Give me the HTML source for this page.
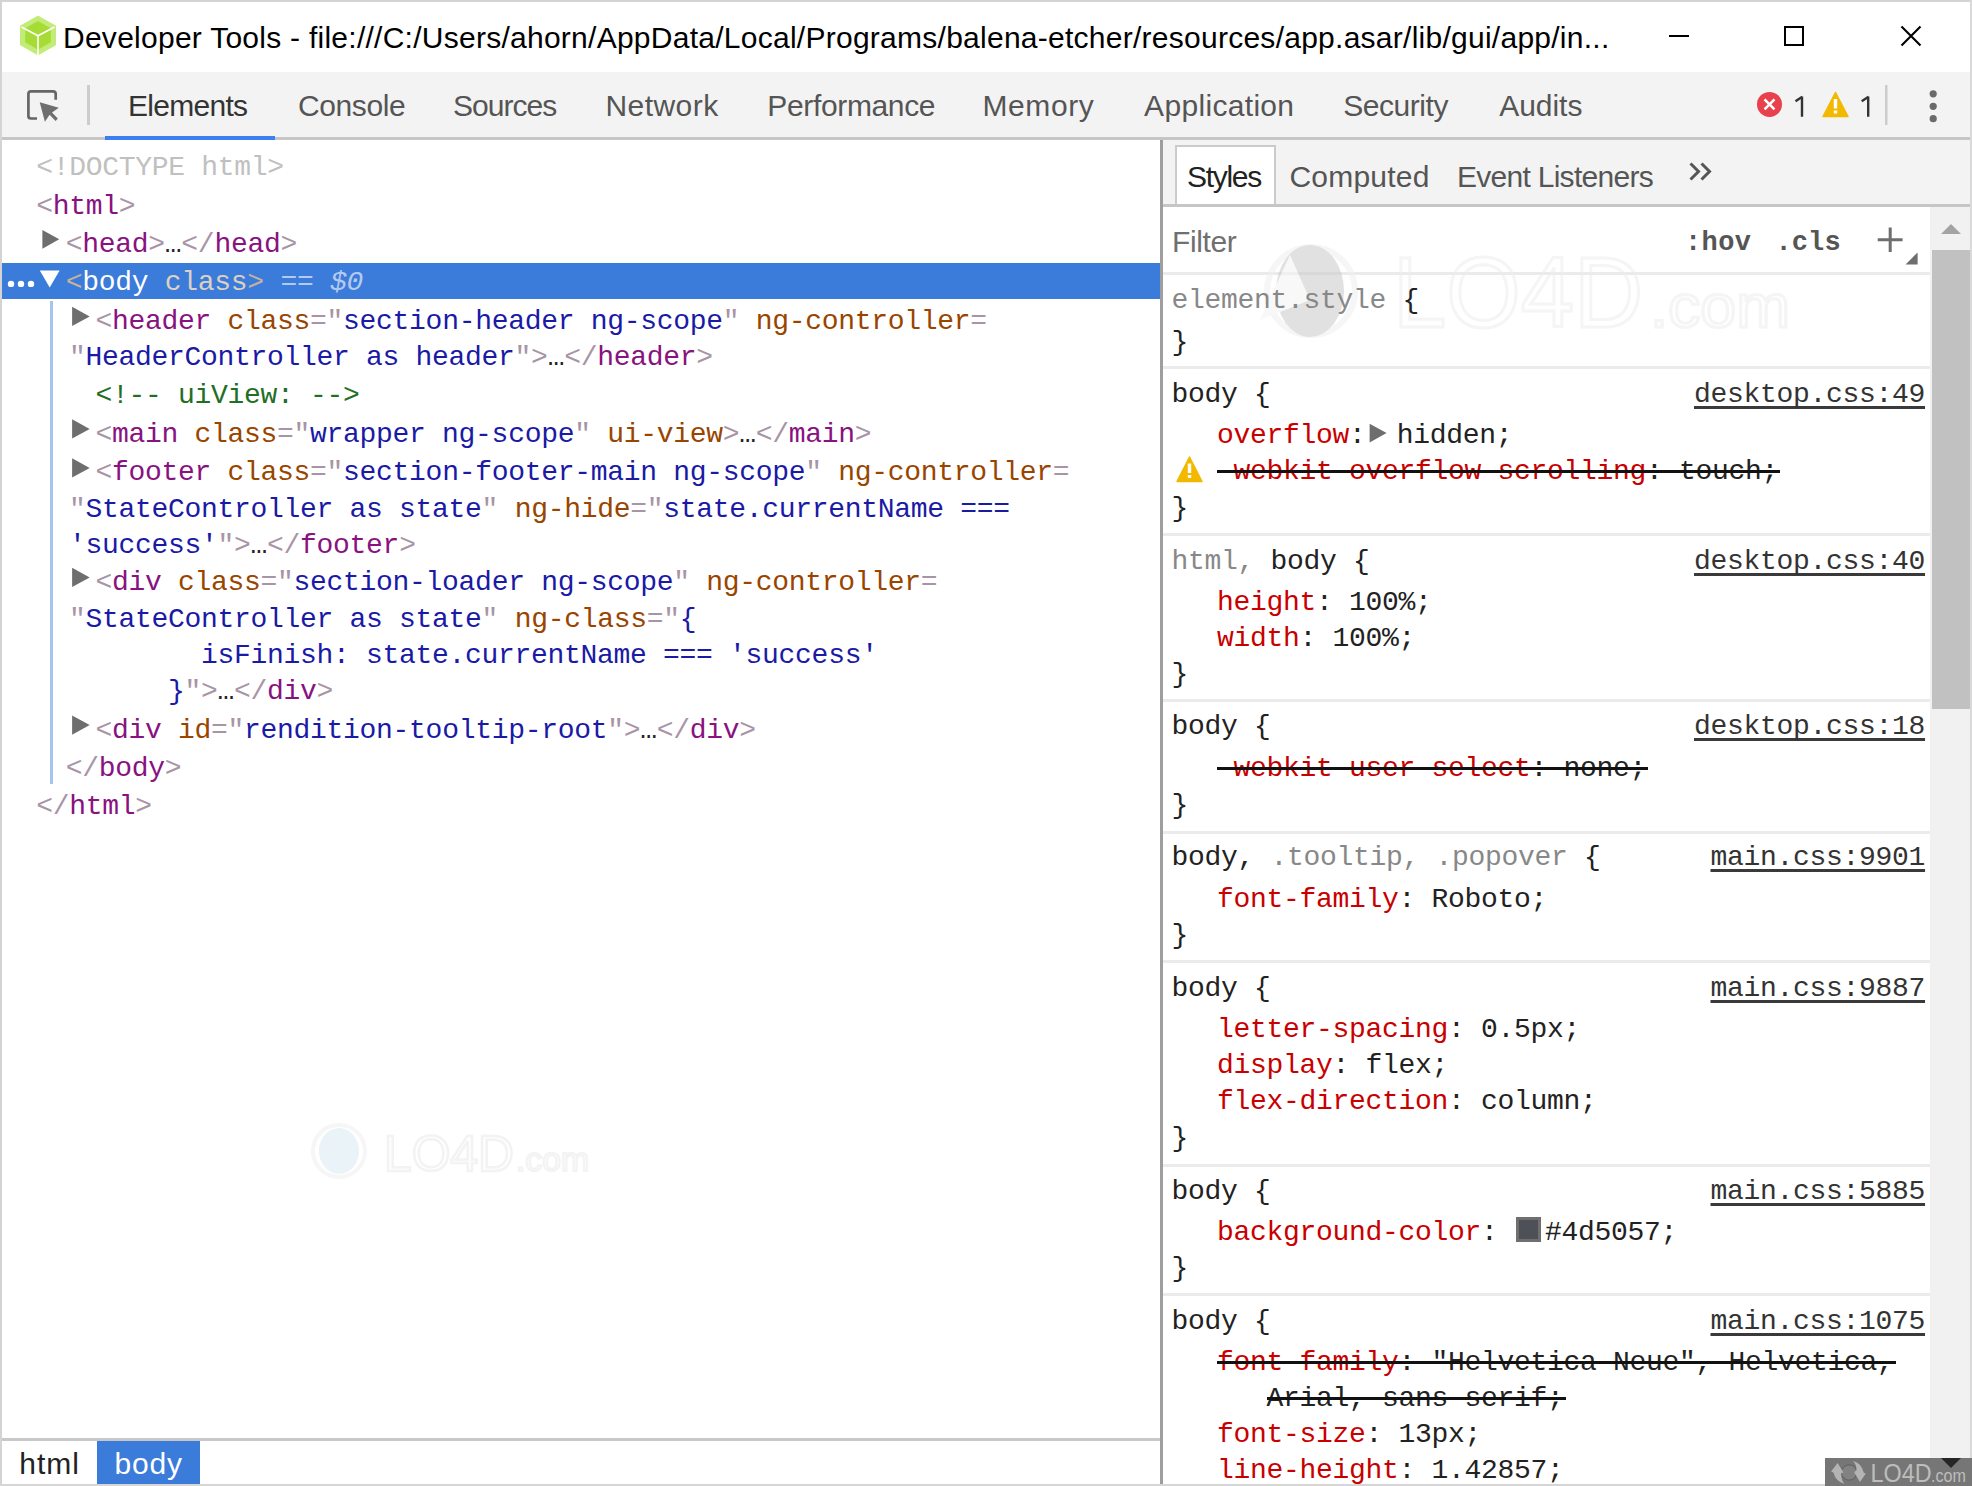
<!DOCTYPE html>
<html><head><meta charset="utf-8">
<style>
html,body{margin:0;padding:0}
body{width:1972px;height:1486px;position:relative;overflow:hidden;background:#fff;font-family:"Liberation Sans",sans-serif}
.r{position:absolute}
.t{position:absolute;white-space:pre}
.m{position:absolute;white-space:pre;font-family:"Liberation Mono",monospace;font-size:28px;line-height:40px}
</style></head><body>
<!-- window border -->
<div class="r" style="left:0;top:0;width:1972px;height:2px;background:#d4d4d4"></div>
<div class="r" style="left:0;top:0;width:2px;height:1486px;background:#d4d4d4"></div>
<div class="r" style="left:1970px;top:0;width:2px;height:1486px;background:#d9d9d9"></div>
<div class="r" style="left:0;top:1484px;width:1972px;height:2px;background:#d6d6d6"></div>
<!-- title icon -->
<svg class="r" style="left:0;top:0" width="100" height="72" viewBox="0 0 100 72">
  <polygon points="38,16.3 55.4,26 55.4,44.8 38,54.8 20.6,44.8 20.6,26" fill="#c2ec78" stroke="#c2ec78" stroke-width="1.2" stroke-linejoin="round"/>
  <polygon points="38,21 50.8,28.2 50.8,42.3 38,49.8 25.2,42.3 25.2,28.2" fill="#a6dc35"/>
  <polyline points="21.5,27 38,35.8 54.5,27" fill="none" stroke="#fff" stroke-width="1.6"/>
  <line x1="38" y1="35.8" x2="38" y2="55" stroke="#fff" stroke-width="1.6"/>
</svg>
<!-- window controls -->
<div class="r" style="left:1669px;top:35px;width:20px;height:2px;background:#000"></div>
<div class="r" style="left:1784px;top:26px;width:16px;height:16px;border:2px solid #000"></div>
<svg class="r" style="left:1895px;top:20px" width="32" height="32" viewBox="0 0 32 32">
  <path d="M6.5,6.5 L25.5,25.5 M25.5,6.5 L6.5,25.5" stroke="#000" stroke-width="2.1" fill="none"/>
</svg>
<!-- toolbar -->
<div class="r" style="left:2px;top:72px;width:1968px;height:65px;background:#f3f3f3"></div>
<div class="r" style="left:2px;top:137px;width:1968px;height:3px;background:#c6c6c6"></div>
<div class="r" style="left:105px;top:136px;width:170px;height:4px;background:#3b7ff1"></div>
<svg class="r" style="left:0;top:72px" width="100" height="65" viewBox="0 72 100 65">
  <path d="M37,118.5 L31,118.5 Q28.4,118.5 28.4,116 L28.4,94 Q28.4,91.4 31,91.4 L53,91.4 Q55.7,91.4 55.7,94 L55.7,99.8" fill="none" stroke="#666" stroke-width="2.7"/>
  <path d="M39.7,102.3 L58.8,107.8 L52,112.6 L57.8,118.6 L55.6,120.9 L49.6,114.8 L44.9,121.7 Z" fill="#6e6e6e"/>
  <rect x="87" y="85" width="3" height="40" fill="#cccccc"/>
</svg>
<!-- errors -->
<svg class="r" style="left:1740px;top:72px" width="232" height="65" viewBox="1740 72 232 65">
  <circle cx="1769.5" cy="104.4" r="12.5" fill="#e8414c"/>
  <path d="M1764.5,99.4 L1774.5,109.4 M1774.5,99.4 L1764.5,109.4" stroke="#fff" stroke-width="2.6"/>
  <path d="M1835.5,92.5 L1848,116.5 L1823,116.5 Z" fill="#f2b900" stroke="#f2b900" stroke-width="1.5" stroke-linejoin="round"/>
  <rect x="1833.8" y="99" width="3.4" height="9.5" fill="#fff"/>
  <rect x="1833.8" y="110.5" width="3.4" height="3" fill="#fff"/>
  <path d="M1802,96.5 L1802,116.7 M1795.5,101.3 L1802.3,96.8" stroke="#333" stroke-width="2.4" fill="none"/>
  <path d="M1868.2,96.5 L1868.2,116.7 M1861.7,101.3 L1868.5,96.8" stroke="#333" stroke-width="2.4" fill="none"/>
  <rect x="1885" y="85" width="2.5" height="40" fill="#cccccc"/>
  <circle cx="1933.2" cy="93.8" r="3.6" fill="#6b6b6b"/>
  <circle cx="1933.2" cy="106.3" r="3.6" fill="#6b6b6b"/>
  <circle cx="1933.2" cy="118.7" r="3.6" fill="#6b6b6b"/>
</svg>
<!-- left pane -->
<div class="r" style="left:2px;top:263px;width:1158px;height:36px;background:#3b7bd9"></div>
<svg class="r" style="left:0;top:263px" width="100" height="36" viewBox="0 263 100 36">
  <circle cx="11" cy="283.9" r="3.2" fill="#fff"/>
  <circle cx="21" cy="283.9" r="3.2" fill="#fff"/>
  <circle cx="31" cy="283.9" r="3.2" fill="#fff"/>
  <path d="M39.8,270.5 L59.6,270.5 L49.7,287.4 Z" fill="#fff"/>
</svg>
<div class="r" style="left:50px;top:301px;width:3px;height:483px;background:#a7c4ef"></div>
<svg class="r" style="left:0;top:220px" width="100" height="520" viewBox="0 220 100 520">
  <path d="M42.4,230 L59.2,239.3 L42.4,248.7 Z" fill="#6e6e6e"/>
  <path d="M72.1,306.7 L89.7,316.4 L72.1,326 Z" fill="#6e6e6e"/>
  <path d="M72.1,419.3 L89.7,429 L72.1,438.6 Z" fill="#6e6e6e"/>
  <path d="M72.1,458.2 L89.7,467.9 L72.1,477.5 Z" fill="#6e6e6e"/>
  <path d="M72.1,567.8 L89.7,577.5 L72.1,587.1 Z" fill="#6e6e6e"/>
  <path d="M72.1,715.5 L89.7,725.1 L72.1,734.7 Z" fill="#6e6e6e"/>
</svg>
<!-- breadcrumbs -->
<div class="r" style="left:2px;top:1438px;width:1158px;height:3px;background:#c8c8c8"></div>
<div class="r" style="left:97px;top:1441px;width:103px;height:43px;background:#3b7bd9"></div>
<!-- splitter -->
<div class="r" style="left:1160px;top:140px;width:3px;height:1344px;background:#9e9e9e"></div>
<!-- side tab bar -->
<div class="r" style="left:1163px;top:140px;width:807px;height:64px;background:#f3f3f3"></div>
<div class="r" style="left:1163px;top:204px;width:807px;height:3px;background:#c6c6c6"></div>
<div class="r" style="left:1175px;top:145px;width:97px;height:56.5px;border:2.5px solid #cbcbcb;border-bottom:none;background:#fff"></div>
<svg class="r" style="left:1680px;top:150px" width="40" height="40" viewBox="1680 150 40 40">
  <path d="M1690.5,163.5 L1698.5,171.5 L1690.5,179.5 M1701.5,163.5 L1709.5,171.5 L1701.5,179.5" fill="none" stroke="#555" stroke-width="3"/>
</svg>
<!-- filter bar -->
<div class="r" style="left:1163px;top:272px;width:767px;height:3px;background:#ebebeb"></div>
<svg class="r" style="left:1870px;top:220px" width="60" height="50" viewBox="1870 220 60 50">
  <path d="M1890.2,227.5 L1890.2,252 M1877.7,239.8 L1902.6,239.8" stroke="#6e6e6e" stroke-width="3"/>
  <path d="M1917.6,252.4 L1917.6,264.4 L1905.6,264.4 Z" fill="#6e6e6e"/>
</svg>
<!-- scrollbar -->
<div class="r" style="left:1930px;top:207px;width:40px;height:1279px;background:#f1f1f1"></div>
<div class="r" style="left:1932px;top:249.5px;width:38px;height:459px;background:#c1c1c1"></div>
<svg class="r" style="left:1930px;top:210px" width="40" height="30" viewBox="1930 210 40 30">
  <path d="M1951,224 L1961,234 L1941,234 Z" fill="#a3a3a3"/>
</svg>
<!-- style section separators -->
<div class="r" style="left:1163px;top:366px;width:767px;height:3px;background:#ebebeb"></div>
<div class="r" style="left:1163px;top:533px;width:767px;height:3px;background:#ebebeb"></div>
<div class="r" style="left:1163px;top:699px;width:767px;height:3px;background:#ebebeb"></div>
<div class="r" style="left:1163px;top:830.5px;width:767px;height:3px;background:#ebebeb"></div>
<div class="r" style="left:1163px;top:960px;width:767px;height:3px;background:#ebebeb"></div>
<div class="r" style="left:1163px;top:1163.5px;width:767px;height:3px;background:#ebebeb"></div>
<div class="r" style="left:1163px;top:1293px;width:767px;height:3px;background:#ebebeb"></div>
<!-- icons in styles -->
<svg class="r" style="left:1170px;top:450px" width="40" height="40" viewBox="1170 450 40 40">
  <path d="M1189.5,457 L1202,481.5 L1177,481.5 Z" fill="#f2b900" stroke="#f2b900" stroke-width="1.5" stroke-linejoin="round"/>
  <rect x="1187.8" y="463.5" width="3.4" height="9.5" fill="#fff"/>
  <rect x="1187.8" y="475" width="3.4" height="3" fill="#fff"/>
</svg>
<svg class="r" style="left:1360px;top:415px" width="40" height="40" viewBox="1360 415 40 40">
  <path d="M1369.6,423.8 L1386.6,433.1 L1369.6,442.5 Z" fill="#6e6e6e"/>
</svg>
<div class="r" style="left:1516px;top:1216.7px;width:19px;height:19px;border:3px solid #6f6f6f;background:#4d5057"></div>
<!-- watermark bottom right -->
<div class="r" style="left:1825px;top:1458px;width:147px;height:28px;background:#767676"></div>
<svg class="r" style="left:1825px;top:1458px" width="147" height="28" viewBox="1825 1458 147 28">
  <path d="M1941,1458 L1961,1458 L1951,1468 Z" fill="#262626"/>
  <circle cx="1849.1" cy="1472.5" r="7.7" fill="#828282" stroke="#5e5e5e" stroke-width="1"/>
  <path d="M1837.6,1462.9 L1843.5,1472.5 L1841.2,1473.3 Q1841,1480 1844.3,1483.9 Q1835.5,1481 1833.6,1472.7 L1831.1,1471.5 Z" fill="#b4b4b4"/>
  <path d="M1860,1481.9 L1854.2,1472.2 L1856.4,1470.2 Q1857,1465 1852.9,1461 Q1861.5,1463 1863.8,1472.8 L1865.8,1473.5 Z" fill="#b4b4b4"/>
  <text x="1870.5" y="1482" font-family="Liberation Sans" font-size="26" fill="#bdbdbd" textLength="61" lengthAdjust="spacingAndGlyphs">LO4D</text>
  <text x="1931" y="1482" font-family="Liberation Sans" font-size="19" fill="#bdbdbd" textLength="35" lengthAdjust="spacingAndGlyphs">.com</text>
</svg>
<!-- faint watermarks -->
<svg class="r" style="left:1230px;top:225px" width="580" height="130" viewBox="1230 225 580 130" opacity="0.55">
  <circle cx="1311" cy="291" r="44" fill="none" stroke="#f0f0f0" stroke-width="6"/>
  <ellipse cx="1310" cy="291" rx="34" ry="46" fill="#c9c9c9"/>
  <path d="M1260,320 L1290,255 L1310,300 Z" fill="#f4f4f4"/>
  <text x="1393" y="327" font-family="Liberation Sans" font-size="100" fill="none" stroke="#ededed" stroke-width="3" textLength="250" lengthAdjust="spacingAndGlyphs">LO4D</text>
  <text x="1650" y="327" font-family="Liberation Sans" font-size="62" fill="none" stroke="#ededed" stroke-width="3" textLength="140" lengthAdjust="spacingAndGlyphs">.com</text>
</svg>
<svg class="r" style="left:290px;top:1110px" width="320" height="80" viewBox="290 1110 320 80" opacity="0.7">
  <ellipse cx="339" cy="1151" rx="20" ry="23" fill="#e0eef6"/>
  <circle cx="339" cy="1151" r="26" fill="none" stroke="#f3f3f3" stroke-width="4"/>
  <text x="384" y="1171" font-family="Liberation Sans" font-size="50" fill="none" stroke="#eeeeee" stroke-width="2.5" textLength="130" lengthAdjust="spacingAndGlyphs">LO4D</text>
  <text x="516" y="1171" font-family="Liberation Sans" font-size="34" fill="none" stroke="#eeeeee" stroke-width="2" textLength="73" lengthAdjust="spacingAndGlyphs">.com</text>
</svg>
<div class="t" style="left:63.0px;top:18.0px;font:normal 30px 'Liberation Sans', sans-serif;line-height:40px;letter-spacing:0.26px;color:#000;">Developer Tools - file:///C:/Users/ahorn/AppData/Local/Programs/balena-etcher/resources/app.asar/lib/gui/app/in...</div>
<div class="t" style="left:128.0px;top:86.3px;font:normal 30px 'Liberation Sans', sans-serif;line-height:40px;letter-spacing:-0.71px;color:#333;">Elements</div>
<div class="t" style="left:298.0px;top:86.3px;font:normal 30px 'Liberation Sans', sans-serif;line-height:40px;letter-spacing:-0.40px;color:#555;">Console</div>
<div class="t" style="left:453.0px;top:86.3px;font:normal 30px 'Liberation Sans', sans-serif;line-height:40px;letter-spacing:-0.95px;color:#555;">Sources</div>
<div class="t" style="left:605.4px;top:86.3px;font:normal 30px 'Liberation Sans', sans-serif;line-height:40px;letter-spacing:0.47px;color:#555;">Network</div>
<div class="t" style="left:767.3px;top:86.3px;font:normal 30px 'Liberation Sans', sans-serif;line-height:40px;letter-spacing:-0.35px;color:#555;">Performance</div>
<div class="t" style="left:982.4px;top:86.3px;font:normal 30px 'Liberation Sans', sans-serif;line-height:40px;letter-spacing:0.62px;color:#555;">Memory</div>
<div class="t" style="left:1144.1px;top:86.3px;font:normal 30px 'Liberation Sans', sans-serif;line-height:40px;letter-spacing:0.32px;color:#555;">Application</div>
<div class="t" style="left:1343.2px;top:86.3px;font:normal 30px 'Liberation Sans', sans-serif;line-height:40px;letter-spacing:-0.44px;color:#555;">Security</div>
<div class="t" style="left:1499.3px;top:86.3px;font:normal 30px 'Liberation Sans', sans-serif;line-height:40px;letter-spacing:-0.06px;color:#555;">Audits</div>
<div class="t" style="left:1187.0px;top:156.7px;font:normal 30px 'Liberation Sans', sans-serif;line-height:40px;letter-spacing:-1.30px;color:#222;">Styles</div>
<div class="t" style="left:1289.4px;top:157.0px;font:normal 30px 'Liberation Sans', sans-serif;line-height:40px;letter-spacing:0.23px;color:#555;">Computed</div>
<div class="t" style="left:1456.9px;top:157.0px;font:normal 30px 'Liberation Sans', sans-serif;line-height:40px;letter-spacing:-0.71px;color:#555;">Event Listeners</div>
<div class="t" style="left:1172.0px;top:222.1px;font:normal 30px 'Liberation Sans', sans-serif;line-height:40px;letter-spacing:-0.40px;color:#707070;">Filter</div>
<div class="t" style="left:19.3px;top:1443.5px;font:normal 30px 'Liberation Sans', sans-serif;line-height:40px;letter-spacing:1.00px;color:#222;">html</div>
<div class="t" style="left:114.5px;top:1443.5px;font:normal 30px 'Liberation Sans', sans-serif;line-height:40px;letter-spacing:0.83px;color:#fff;">body</div>
<div class="m" style="left:36.3px;top:148.0px;letter-spacing:-0.30px;"><span style="color:#c0c0c0;">&lt;!DOCTYPE html&gt;</span></div>
<div class="m" style="left:36.3px;top:187.0px;letter-spacing:-0.30px;"><span style="color:#a894a6;">&lt;</span><span style="color:#881280;">html</span><span style="color:#a894a6;">&gt;</span></div>
<div class="m" style="left:65.8px;top:225.0px;letter-spacing:-0.30px;"><span style="color:#a894a6;">&lt;</span><span style="color:#881280;">head</span><span style="color:#a894a6;">&gt;</span><span style="color:#222;">…</span><span style="color:#a894a6;">&lt;/</span><span style="color:#881280;">head</span><span style="color:#a894a6;">&gt;</span></div>
<div class="m" style="left:65.8px;top:263.0px;letter-spacing:-0.30px;"><span style="color:#c4b29e;">&lt;</span><span style="color:#fff;">body</span><span style="color:#fff;"> </span><span style="color:#dcd0c2;">class</span><span style="color:#c4b29e;">&gt;</span><span style="color:#b4c9f0;"> == </span><span style="color:#b4c9f0;font-style:italic">$0</span></div>
<div class="m" style="left:95.5px;top:302.0px;letter-spacing:-0.30px;"><span style="color:#a894a6;">&lt;</span><span style="color:#881280;">header</span><span style="color:#881280;"> </span><span style="color:#994500;">class</span><span style="color:#a894a6;">=</span><span style="color:#a894a6;">"</span><span style="color:#1a1aa6;">section-header ng-scope</span><span style="color:#a894a6;">"</span><span style="color:#1a1aa6;"> </span><span style="color:#994500;">ng-controller</span><span style="color:#a894a6;">=</span></div>
<div class="m" style="left:69.0px;top:338.0px;letter-spacing:-0.30px;"><span style="color:#a894a6;">"</span><span style="color:#1a1aa6;">HeaderController as header</span><span style="color:#a894a6;">"</span><span style="color:#a894a6;">&gt;</span><span style="color:#222;">…</span><span style="color:#a894a6;">&lt;/</span><span style="color:#881280;">header</span><span style="color:#a894a6;">&gt;</span></div>
<div class="m" style="left:95.5px;top:376.0px;letter-spacing:-0.30px;"><span style="color:#236e25;">&lt;!-- uiView: --&gt;</span></div>
<div class="m" style="left:95.5px;top:414.5px;letter-spacing:-0.30px;"><span style="color:#a894a6;">&lt;</span><span style="color:#881280;">main</span><span style="color:#881280;"> </span><span style="color:#994500;">class</span><span style="color:#a894a6;">=</span><span style="color:#a894a6;">"</span><span style="color:#1a1aa6;">wrapper ng-scope</span><span style="color:#a894a6;">"</span><span style="color:#1a1aa6;"> </span><span style="color:#994500;">ui-view</span><span style="color:#a894a6;">&gt;</span><span style="color:#222;">…</span><span style="color:#a894a6;">&lt;/</span><span style="color:#881280;">main</span><span style="color:#a894a6;">&gt;</span></div>
<div class="m" style="left:95.5px;top:453.4px;letter-spacing:-0.30px;"><span style="color:#a894a6;">&lt;</span><span style="color:#881280;">footer</span><span style="color:#881280;"> </span><span style="color:#994500;">class</span><span style="color:#a894a6;">=</span><span style="color:#a894a6;">"</span><span style="color:#1a1aa6;">section-footer-main ng-scope</span><span style="color:#a894a6;">"</span><span style="color:#1a1aa6;"> </span><span style="color:#994500;">ng-controller</span><span style="color:#a894a6;">=</span></div>
<div class="m" style="left:69.0px;top:490.0px;letter-spacing:-0.30px;"><span style="color:#a894a6;">"</span><span style="color:#1a1aa6;">StateController as state</span><span style="color:#a894a6;">"</span><span style="color:#1a1aa6;"> </span><span style="color:#994500;">ng-hide</span><span style="color:#a894a6;">=</span><span style="color:#a894a6;">"</span><span style="color:#1a1aa6;">state.currentName ===</span></div>
<div class="m" style="left:69.0px;top:525.5px;letter-spacing:-0.30px;"><span style="color:#1a1aa6;">'success'</span><span style="color:#a894a6;">"</span><span style="color:#a894a6;">&gt;</span><span style="color:#222;">…</span><span style="color:#a894a6;">&lt;/</span><span style="color:#881280;">footer</span><span style="color:#a894a6;">&gt;</span></div>
<div class="m" style="left:95.5px;top:563.0px;letter-spacing:-0.30px;"><span style="color:#a894a6;">&lt;</span><span style="color:#881280;">div</span><span style="color:#881280;"> </span><span style="color:#994500;">class</span><span style="color:#a894a6;">=</span><span style="color:#a894a6;">"</span><span style="color:#1a1aa6;">section-loader ng-scope</span><span style="color:#a894a6;">"</span><span style="color:#1a1aa6;"> </span><span style="color:#994500;">ng-controller</span><span style="color:#a894a6;">=</span></div>
<div class="m" style="left:69.0px;top:599.5px;letter-spacing:-0.30px;"><span style="color:#a894a6;">"</span><span style="color:#1a1aa6;">StateController as state</span><span style="color:#a894a6;">"</span><span style="color:#1a1aa6;"> </span><span style="color:#994500;">ng-class</span><span style="color:#a894a6;">=</span><span style="color:#a894a6;">"</span><span style="color:#1a1aa6;">{</span></div>
<div class="m" style="left:69.0px;top:635.5px;letter-spacing:-0.30px;"><span style="color:#1a1aa6;">        isFinish: state.currentName === 'success'</span></div>
<div class="m" style="left:69.0px;top:671.5px;letter-spacing:-0.30px;"><span style="color:#1a1aa6;">      }</span><span style="color:#a894a6;">"</span><span style="color:#a894a6;">&gt;</span><span style="color:#222;">…</span><span style="color:#a894a6;">&lt;/</span><span style="color:#881280;">div</span><span style="color:#a894a6;">&gt;</span></div>
<div class="m" style="left:95.5px;top:710.5px;letter-spacing:-0.30px;"><span style="color:#a894a6;">&lt;</span><span style="color:#881280;">div</span><span style="color:#881280;"> </span><span style="color:#994500;">id</span><span style="color:#a894a6;">=</span><span style="color:#a894a6;">"</span><span style="color:#1a1aa6;">rendition-tooltip-root</span><span style="color:#a894a6;">"</span><span style="color:#a894a6;">&gt;</span><span style="color:#222;">…</span><span style="color:#a894a6;">&lt;/</span><span style="color:#881280;">div</span><span style="color:#a894a6;">&gt;</span></div>
<div class="m" style="left:65.8px;top:748.5px;letter-spacing:-0.30px;"><span style="color:#a894a6;">&lt;/</span><span style="color:#881280;">body</span><span style="color:#a894a6;">&gt;</span></div>
<div class="m" style="left:36.3px;top:787.4px;letter-spacing:-0.30px;"><span style="color:#a894a6;">&lt;/</span><span style="color:#881280;">html</span><span style="color:#a894a6;">&gt;</span></div>
<div class="m" style="left:1171.5px;top:281.0px;letter-spacing:-0.30px;"><span style="color:#888;">element.style</span><span style="color:#222;"> {</span></div>
<div class="m" style="left:1171.5px;top:322.5px;letter-spacing:-0.30px;"><span style="color:#222;">}</span></div>
<div class="m" style="left:1171.5px;top:374.5px;letter-spacing:-0.30px;"><span style="color:#222;">body {</span></div>
<div class="m" style="left:1694.0px;top:374.5px;letter-spacing:-0.30px;"><span style="color:#333;text-decoration:underline;text-decoration-thickness:3px;text-underline-offset:4px;text-decoration-color:#3a3a3a;text-decoration-skip-ink:none">desktop.css:49</span></div>
<div class="m" style="left:1217.0px;top:415.5px;letter-spacing:-0.30px;"><span style="color:#c80000;">overflow</span><span style="color:#222;">:</span></div>
<div class="m" style="left:1396.8px;top:415.5px;letter-spacing:-0.30px;"><span style="color:#222;">hidden;</span></div>
<div class="m" style="left:1217.0px;top:452.0px;letter-spacing:-0.30px;"><span style="color:#c80000;">-webkit-overflow-scrolling</span><span style="color:#222;">: touch;</span></div>
<div style="position:absolute;left:1217.0px;top:470.0px;width:563.0px;height:3px;background:#111"></div>
<div class="m" style="left:1171.5px;top:488.5px;letter-spacing:-0.30px;"><span style="color:#222;">}</span></div>
<div class="m" style="left:1171.5px;top:542.0px;letter-spacing:-0.30px;"><span style="color:#888;">html,</span><span style="color:#222;"> body {</span></div>
<div class="m" style="left:1694.0px;top:542.0px;letter-spacing:-0.30px;"><span style="color:#333;text-decoration:underline;text-decoration-thickness:3px;text-underline-offset:4px;text-decoration-color:#3a3a3a;text-decoration-skip-ink:none">desktop.css:40</span></div>
<div class="m" style="left:1217.0px;top:583.0px;letter-spacing:-0.30px;"><span style="color:#c80000;">height</span><span style="color:#222;">: 100%;</span></div>
<div class="m" style="left:1217.0px;top:619.0px;letter-spacing:-0.30px;"><span style="color:#c80000;">width</span><span style="color:#222;">: 100%;</span></div>
<div class="m" style="left:1171.5px;top:655.0px;letter-spacing:-0.30px;"><span style="color:#222;">}</span></div>
<div class="m" style="left:1171.5px;top:706.5px;letter-spacing:-0.30px;"><span style="color:#222;">body {</span></div>
<div class="m" style="left:1694.0px;top:706.5px;letter-spacing:-0.30px;"><span style="color:#333;text-decoration:underline;text-decoration-thickness:3px;text-underline-offset:4px;text-decoration-color:#3a3a3a;text-decoration-skip-ink:none">desktop.css:18</span></div>
<div class="m" style="left:1217.0px;top:749.0px;letter-spacing:-0.30px;"><span style="color:#c80000;">-webkit-user-select</span><span style="color:#222;">: none;</span></div>
<div style="position:absolute;left:1217.0px;top:767.0px;width:431.0px;height:3px;background:#111"></div>
<div class="m" style="left:1171.5px;top:785.5px;letter-spacing:-0.30px;"><span style="color:#222;">}</span></div>
<div class="m" style="left:1171.5px;top:838.0px;letter-spacing:-0.30px;"><span style="color:#222;">body, </span><span style="color:#888;">.tooltip, .popover</span><span style="color:#222;"> {</span></div>
<div class="m" style="left:1710.5px;top:838.0px;letter-spacing:-0.30px;"><span style="color:#333;text-decoration:underline;text-decoration-thickness:3px;text-underline-offset:4px;text-decoration-color:#3a3a3a;text-decoration-skip-ink:none">main.css:9901</span></div>
<div class="m" style="left:1217.0px;top:879.5px;letter-spacing:-0.30px;"><span style="color:#c80000;">font-family</span><span style="color:#222;">: Roboto;</span></div>
<div class="m" style="left:1171.5px;top:916.0px;letter-spacing:-0.30px;"><span style="color:#222;">}</span></div>
<div class="m" style="left:1171.5px;top:968.5px;letter-spacing:-0.30px;"><span style="color:#222;">body {</span></div>
<div class="m" style="left:1710.5px;top:968.5px;letter-spacing:-0.30px;"><span style="color:#333;text-decoration:underline;text-decoration-thickness:3px;text-underline-offset:4px;text-decoration-color:#3a3a3a;text-decoration-skip-ink:none">main.css:9887</span></div>
<div class="m" style="left:1217.0px;top:1009.7px;letter-spacing:-0.30px;"><span style="color:#c80000;">letter-spacing</span><span style="color:#222;">: 0.5px;</span></div>
<div class="m" style="left:1217.0px;top:1045.5px;letter-spacing:-0.30px;"><span style="color:#c80000;">display</span><span style="color:#222;">: flex;</span></div>
<div class="m" style="left:1217.0px;top:1081.5px;letter-spacing:-0.30px;"><span style="color:#c80000;">flex-direction</span><span style="color:#222;">: column;</span></div>
<div class="m" style="left:1171.5px;top:1118.5px;letter-spacing:-0.30px;"><span style="color:#222;">}</span></div>
<div class="m" style="left:1171.5px;top:1171.6px;letter-spacing:-0.30px;"><span style="color:#222;">body {</span></div>
<div class="m" style="left:1710.5px;top:1171.6px;letter-spacing:-0.30px;"><span style="color:#333;text-decoration:underline;text-decoration-thickness:3px;text-underline-offset:4px;text-decoration-color:#3a3a3a;text-decoration-skip-ink:none">main.css:5885</span></div>
<div class="m" style="left:1217.0px;top:1212.5px;letter-spacing:-0.30px;"><span style="color:#c80000;">background-color</span><span style="color:#222;">:</span></div>
<div class="m" style="left:1545.0px;top:1212.5px;letter-spacing:-0.30px;"><span style="color:#222;">#4d5057;</span></div>
<div class="m" style="left:1171.5px;top:1249.0px;letter-spacing:-0.30px;"><span style="color:#222;">}</span></div>
<div class="m" style="left:1171.5px;top:1301.7px;letter-spacing:-0.30px;"><span style="color:#222;">body {</span></div>
<div class="m" style="left:1710.5px;top:1301.7px;letter-spacing:-0.30px;"><span style="color:#333;text-decoration:underline;text-decoration-thickness:3px;text-underline-offset:4px;text-decoration-color:#3a3a3a;text-decoration-skip-ink:none">main.css:1075</span></div>
<div class="m" style="left:1217.0px;top:1342.5px;letter-spacing:-0.30px;"><span style="color:#c80000;">font-family</span><span style="color:#222;">: "Helvetica Neue", Helvetica,</span></div>
<div style="position:absolute;left:1217.0px;top:1360.5px;width:678.5px;height:3px;background:#111"></div>
<div class="m" style="left:1266.5px;top:1378.5px;letter-spacing:-0.30px;"><span style="color:#222;">Arial, sans-serif;</span></div>
<div style="position:absolute;left:1266.5px;top:1396.5px;width:299.0px;height:3px;background:#111"></div>
<div class="m" style="left:1217.0px;top:1415.0px;letter-spacing:-0.30px;"><span style="color:#c80000;">font-size</span><span style="color:#222;">: 13px;</span></div>
<div class="m" style="left:1217.0px;top:1451.0px;letter-spacing:-0.30px;"><span style="color:#c80000;">line-height</span><span style="color:#222;">: 1.42857;</span></div>
<div class="t" style="left:1685px;top:223.0px;font:bold 27px 'Liberation Mono', monospace;line-height:40px;color:#555;letter-spacing:0.4px">:hov</div>
<div class="t" style="left:1775.5px;top:223.0px;font:bold 27px 'Liberation Mono', monospace;line-height:40px;color:#555;letter-spacing:0.1px">.cls</div>
</body></html>
